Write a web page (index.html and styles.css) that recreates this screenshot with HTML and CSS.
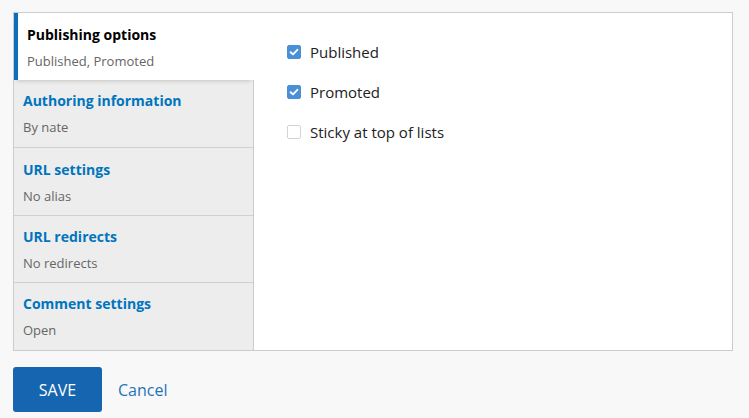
FILE: index.html
```html
<!DOCTYPE html>
<html>
<head>
<meta charset="utf-8">
<link rel="stylesheet" href="styles.css">
</head>
<body>
<div class="page">
  <div class="vtabs">
    <ul class="menu">
      <li class="tab active">
        <div class="tab-title">Publishing options</div>
        <div class="tab-summary">Published, Promoted</div>
      </li>
      <li class="tab">
        <div class="tab-title">Authoring information</div>
        <div class="tab-summary">By nate</div>
      </li>
      <li class="tab tall">
        <div class="tab-title">URL settings</div>
        <div class="tab-summary">No alias</div>
      </li>
      <li class="tab">
        <div class="tab-title">URL redirects</div>
        <div class="tab-summary">No redirects</div>
      </li>
      <li class="tab last">
        <div class="tab-title">Comment settings</div>
        <div class="tab-summary">Open</div>
      </li>
    </ul>
    <div class="pane">
      <label class="item"><span class="cb checked"><svg viewBox="0 0 14 14" width="14" height="14"><path d="M3.6 7.2 L6 9.4 L10.4 4.8" fill="none" stroke="#fff" stroke-width="1.9" stroke-linecap="round" stroke-linejoin="round"/></svg></span><span class="lbl">Published</span></label>
      <label class="item"><span class="cb checked"><svg viewBox="0 0 14 14" width="14" height="14"><path d="M3.6 7.2 L6 9.4 L10.4 4.8" fill="none" stroke="#fff" stroke-width="1.9" stroke-linecap="round" stroke-linejoin="round"/></svg></span><span class="lbl">Promoted</span></label>
      <label class="item"><span class="cb"></span><span class="lbl">Sticky at top of lists</span></label>
    </div>
  </div>
  <div class="actions">
    <button class="btn-save">SAVE</button>
    <a class="cancel">Cancel</a>
  </div>
</div>
</body>
</html>
```

FILE: styles.css
```css
html, body {
  margin: 0;
  padding: 0;
  background: #f8f8f8;
}
body {
  font-family: "Open Sans", "Noto Sans", sans-serif;
  color: #222;
}
.page {
  padding: 12px 0 0 13px;
  width: 720px;
}
.vtabs {
  display: flex;
  border: 1px solid #ccc;
  background: #fff;
  height: 339px;
  box-sizing: border-box;
}
.menu {
  list-style: none;
  margin: 0;
  padding: 0;
  width: 239px;
  background: #ededed;
  border-right: 1px solid #ccc;
  display: flex;
  flex-direction: column;
}
.tab {
  height: 67px;
  box-sizing: border-box;
  padding: 10px 10px 0 9px;
  border-top: 1px solid #d0d0d0;
}
.tab:first-child {
  border-top: none;
}
.tab.tall {
  height: 68px;
  padding-top: 11px;
}
.tab.last {
  flex: 1;
}
.tab.active {
  background: #fff;
  border-left: 4px solid #0a6fbd;
  padding-left: 9px;
  padding-top: 11px;
  margin-right: -1px;
  position: relative;
  z-index: 1;
  height: 67px;
  box-shadow: 0 4px 4px -3px rgba(0,0,0,0.18);
}
.tab.active + .tab {
  border-top: none;
  height: 67px;
}
.tab-title {
  font-size: 14px;
  font-weight: bold;
  line-height: 22px;
  color: #0074bd;
}
.active .tab-title {
  color: #000;
}
.tab-summary {
  margin-top: 5px;
  font-size: 13px;
  line-height: 20px;
  color: #666;
}
.pane {
  flex: 1;
  padding: 29px 0 0 33px;
}
.item {
  display: flex;
  align-items: center;
  height: 20px;
  margin-bottom: 20px;
  font-size: 15px;
  color: #222;
}
.cb {
  width: 14px;
  height: 14px;
  box-sizing: border-box;
  border: 1px solid #d4d4d4;
  border-radius: 2px;
  background: #fff;
  margin-right: 9px;
  display: inline-flex;
}
.cb.checked {
  background: #4a90d9;
  border-color: #4a90d9;
}
.cb.checked svg {
  margin: -1px;
}
.actions {
  display: flex;
  align-items: center;
  margin-top: 16px;
}
.btn-save {
  width: 89px;
  height: 45px;
  border: none;
  border-radius: 3px;
  background: #1565b0;
  color: #fff;
  font-family: "Open Sans", "Noto Sans", sans-serif;
  font-size: 16px;
  padding: 0;
}
.cancel {
  margin-left: 16px;
  color: #1f73b7;
  font-size: 16px;
}
```
